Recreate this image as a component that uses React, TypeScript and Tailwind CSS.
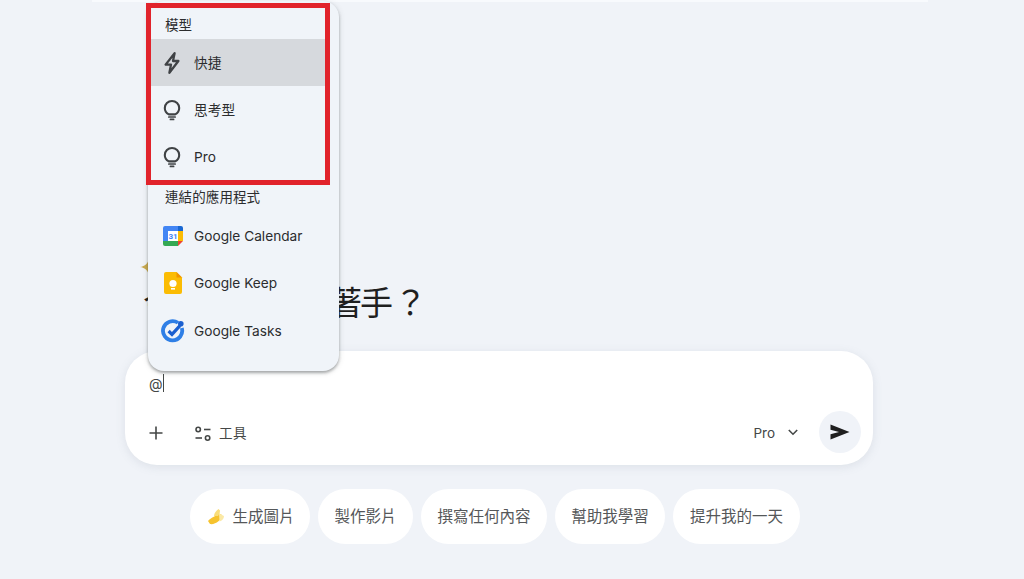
import React from "react";

const font = { fontFamily: '"Inter", "Noto Sans CJK TC", sans-serif' };

function Bulb() {
  return (
    <svg width="26" height="26" viewBox="0 0 26 26" fill="none" stroke="#3f4245" strokeWidth="2.1" strokeLinecap="round">
      <path d="M9.8 17.4 C7.4 16.1 5.8 13.8 5.8 11 C5.8 7.1 9 4 13 4 C17 4 20.2 7.1 20.2 11 C20.2 13.8 18.6 16.1 16.2 17.4 Z" strokeLinejoin="round" />
      <path d="M9.8 20 H16.2" strokeWidth="1.7" />
      <path d="M11.4 22.4 H14.6" strokeWidth="1.7" />
    </svg>
  );
}

function Bolt() {
  return (
    <svg width="26" height="26" viewBox="0 0 26 26" fill="none" stroke="#3f4245" strokeWidth="2.3" strokeLinejoin="round">
      <path d="M15.6 3.2 L6.6 14.6 H12 L10.4 22.8 L19.4 11 H14 Z" />
    </svg>
  );
}

function CalendarIcon() {
  return (
    <svg className="ml-[2px]" width="22" height="22" viewBox="0 0 22 22">
      <path d="M3 1 H16 V6 H6 V16 H1 V3 A2 2 0 0 1 3 1 Z" fill="#4285f4" />
      <path d="M16 1 H19 A2 2 0 0 1 21 3 V6 H16 Z" fill="#1967d2" />
      <rect x="16" y="6" width="5" height="10" fill="#fbbc04" />
      <path d="M6 16 H16 V21 H3 A2 2 0 0 1 1 19 V16 Z" fill="#34a853" />
      <path d="M16 16 H21 L16 21 Z" fill="#ea4335" />
      <rect x="6" y="6" width="10" height="10" fill="#ffffff" />
      <text x="11" y="14" textAnchor="middle" fontSize="8" fontWeight="700" fill="#4285f4" fontFamily="Roboto, sans-serif">31</text>
    </svg>
  );
}

function KeepIcon() {
  return (
    <svg className="ml-[2px]" width="22" height="24" viewBox="0 0 22 24">
      <path d="M4 1 H14.5 L20 6.5 V21 A2 2 0 0 1 18 23 H4 A2 2 0 0 1 2 21 V3 A2 2 0 0 1 4 1 Z" fill="#fbbc04" />
      <path d="M14.5 1 L20 6.5 H14.5 Z" fill="#f09300" />
      <circle cx="11" cy="12.5" r="3.6" fill="#ffffff" />
      <rect x="9" y="17" width="4" height="1.6" fill="#ffffff" />
    </svg>
  );
}

function TasksIcon() {
  return (
    <svg className="ml-[2px]" width="24" height="24" viewBox="0 0 24 24" fill="none">
      <path d="M17 3.8 A9.6 9.6 0 1 0 20.8 9" stroke="#2f7fe6" strokeWidth="3.8" />
      <path d="M7.6 12 L11 15.4 L19 6.6" stroke="#1a5fd0" strokeWidth="3.2" />
      <circle cx="19.8" cy="4.8" r="2.8" fill="#1a5fd0" />
    </svg>
  );
}

function Banana() {
  return (
    <svg className="ml-[2px]" width="18" height="18" viewBox="0 0 18 18">
      <path d="M1 13 C4 9 9 9 11 5 L15 7 C15 12 8 17 3 16 Z" fill="#f6c32f" />
      <path d="M7 8 C7 5 9 3 11.5 1 L13 2.5 C13 4.5 12.5 6 11 8 Z" fill="#f9dd7a" />
      <path d="M12 5.5 L17 8 C17 11 15 12.5 12.5 13.5 Z" fill="#fbe9a6" />
    </svg>
  );
}

function Row({ icon, label, active }: { icon: React.ReactNode; label: string; active?: boolean }) {
  return (
    <div className={`flex h-[47.4px] w-[178px] items-center ${active ? "bg-[#d6d9dd]" : ""}`}>
      <div className="flex w-[46px] shrink-0 items-center justify-center pl-[2px]">{icon}</div>
      <span className="text-[13.7px] leading-5 text-[#2b2c2e]">{label}</span>
    </div>
  );
}

export default function App() {
  const chips = [
    { t: "製作影片", w: "w-[95px]" },
    { t: "撰寫任何內容", w: "w-[126px]" },
    { t: "幫助我學習", w: "w-[110px]" },
    { t: "提升我的一天", w: "w-[127px]" },
  ];
  return (
    <div className="relative h-[579px] w-full overflow-hidden bg-[#f0f3f8]" style={font}>
      <div className="ml-[92px] mr-[96px] h-[2px] bg-[#f8fafd]" />

      <main className="ml-[125px] w-[748px]">
        <div className="ml-[15px] mt-[256px] h-[18px]">
          <svg width="18" height="18" viewBox="0 0 18 18">
            <path d="M9 0 C9.6 5 13 8.4 18 9 C13 9.6 9.6 13 9 18 C8.4 13 5 9.6 0 9 C5 8.4 8.4 5 9 0 Z" fill="#c9a94f" />
          </svg>
        </div>
        <h1 className="ml-[18px] mt-[7px] h-[40px] text-[33px] font-normal leading-[40px] tracking-[-2px] text-[#1f1f1f]">
          今天想從哪裡著手<span className="ml-[3px]">？</span>
        </h1>

        <section className="mt-[28px] flex h-[114px] flex-col rounded-[32px] bg-white px-[20px] pb-[12px] pt-[22px] shadow-[0_2px_10px_rgba(120,130,150,0.16)]">
          <div className="flex h-5 items-center pl-[4px] text-[14px] text-[#444746]">
            @<span className="h-[18px] w-px bg-[#444746]" />
          </div>
          <div className="mt-auto flex items-center">
            <svg className="ml-[1px] mt-[2px]" width="20" height="20" viewBox="0 0 20 20" stroke="#444746" strokeWidth="1.6">
              <path d="M10 3.5 V16.5 M3.5 10 H16.5" />
            </svg>
            <div className="ml-[28px] mt-[3px] flex items-center gap-[7px]">
              <svg width="18" height="18" viewBox="0 0 18 18" fill="none" stroke="#444746" strokeWidth="1.6">
                <circle cx="4.2" cy="4.5" r="2.2" />
                <path d="M10 4.5 H16.5" />
                <path d="M1.5 13 H8" />
                <circle cx="13.6" cy="13" r="2.2" />
              </svg>
              <span className="text-[13.5px] tracking-[0.4px] text-[#444746]">工具</span>
            </div>
            <span className="ml-auto mt-[2px] text-[13.5px] text-[#444746]">Pro</span>
            <svg className="ml-[9px]" width="18" height="18" viewBox="0 0 18 18" fill="none" stroke="#444746" strokeWidth="1.6">
              <path d="M4.8 7 L9 11.2 L13.2 7" />
            </svg>
            <div className="ml-[17px] mr-[-8px] flex h-[42px] w-[42px] items-center justify-center rounded-full bg-[#f0f3f8]">
              <svg width="22" height="22" viewBox="0 0 22 22">
                <path d="M1.5 3.5 L20.5 11 L1.5 18.5 V13.2 L10 11 L1.5 8.8 Z" fill="#1f1f1f" />
              </svg>
            </div>
          </div>
        </section>

        <div className="ml-[65px] mt-[24px] flex gap-[8px] text-[15.5px] text-[#555759]">
          <div className="flex h-[55px] w-[120px] items-center justify-center gap-[7px] rounded-full bg-white">
            <Banana />
            <span>生成圖片</span>
          </div>
          {chips.map((c) => (
            <div key={c.t} className={`flex h-[55px] items-center justify-center rounded-full bg-white ${c.w}`}>
              {c.t}
            </div>
          ))}
        </div>
      </main>

      {/* dropdown menu over the page */}
      <div className="absolute left-[148px] top-[1px] h-[370px] w-[191px] overflow-hidden rounded-[16px] bg-[#f0f4f9] shadow-[0_2px_3px_rgba(60,64,67,0.4),0_1px_6px_rgba(60,64,67,0.15)]">
        <div className="flex h-[38px] items-end pb-[4px] pl-[17px] text-[13.5px] leading-5 text-[#2b2c2e]">模型</div>
        <Row icon={<Bolt />} label="快捷" active />
        <Row icon={<Bulb />} label="思考型" />
        <Row icon={<Bulb />} label="Pro" />
        <div className="flex h-[26px] items-end pl-[17px] text-[13.5px] tracking-[0.1px] leading-5 text-[#2b2c2e]">連結的應用程式</div>
        <div className="mt-[5px]">
          <Row icon={<CalendarIcon />} label="Google Calendar" />
          <Row icon={<KeepIcon />} label="Google Keep" />
          <Row icon={<TasksIcon />} label="Google Tasks" />
        </div>
      </div>

      {/* annotation rectangle */}
      <div className="absolute left-[146px] top-[3px] h-[182px] w-[184px] border-[5px] border-[#e1232b]" />
    </div>
  );
}
